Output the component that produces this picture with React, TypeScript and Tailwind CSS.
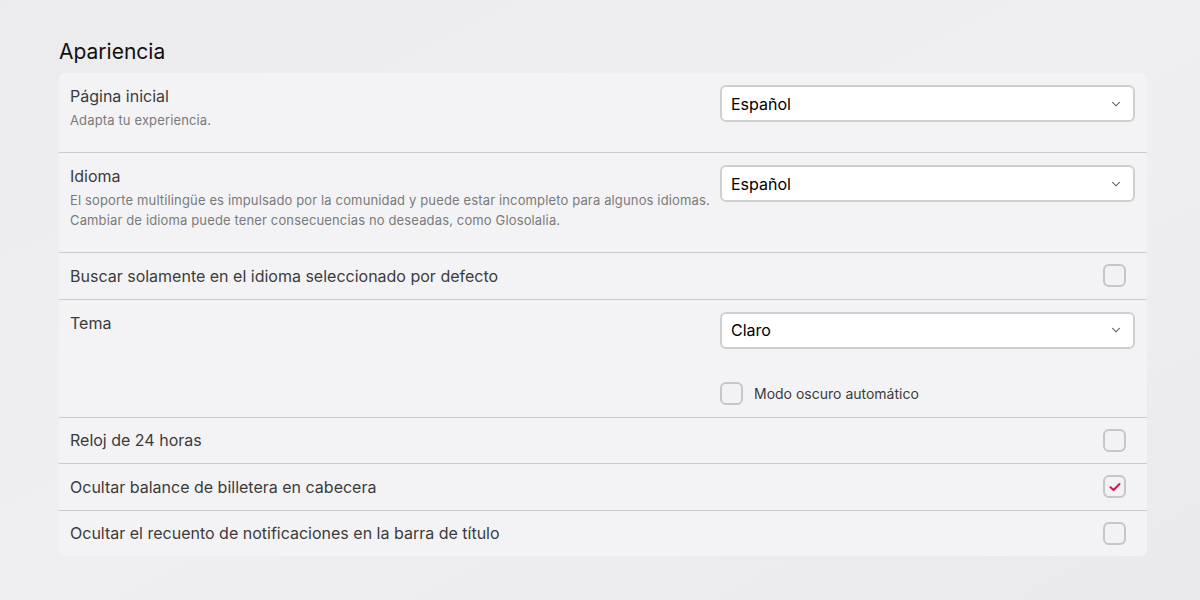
import React from 'react';
import { ChevronDown } from 'lucide-react';

const Select: React.FC<{ value: string }> = ({ value }) => (
  <div className="flex h-[37px] w-full items-center justify-between rounded-[6px] border-2 border-[#cfcfd1] bg-white pl-[9px] pr-[10px]">
    <span className="text-[16px] font-normal text-black">{value}</span>
    <ChevronDown size={14} strokeWidth={1.75} className="text-[#444]" />
  </div>
);

const Checkbox: React.FC<{ checked?: boolean }> = ({ checked }) => (
  <div className="flex h-[23px] w-[23px] flex-shrink-0 items-center justify-center rounded-[6px] border-2 border-[#c6c6c8] bg-[#f2f2f4]">
    {checked && (
      <svg width="14" height="14" viewBox="0 0 14 14" fill="none">
        <path d="M2.5 7.2 L5.6 10 L11.5 4" stroke="#cc1452" strokeWidth="2" strokeLinecap="round" strokeLinejoin="round" />
      </svg>
    )}
  </div>
);

const Label: React.FC<{ children: React.ReactNode }> = ({ children }) => (
  <div className="text-[16px] leading-[22px] text-[#3b3b3d]">{children}</div>
);

const Desc: React.FC<{ children: React.ReactNode }> = ({ children }) => (
  <div className="mt-[3px] mb-[10px] text-[13px] leading-[20px] tracking-[0.14px] text-[#7a7a7c]">{children}</div>
);

const CheckRow: React.FC<{ label: string; checked?: boolean; last?: boolean }> = ({ label, checked, last }) => (
  <div className={`flex items-center justify-between py-[11.25px] pl-[11px] pr-[21px] ${last ? '' : 'border-b border-[#cbcbcd]'}`}>
    <Label>{label}</Label>
    <Checkbox checked={checked} />
  </div>
);

export default function App() {
  return (
    <div
      className="min-h-[600px] w-full bg-gradient-to-br from-[#ececee] via-[#efeff1] to-[#eaeaec] px-[59px] pt-[38px]"
      style={{ fontFamily: 'Inter, "Noto Sans", sans-serif' }}
    >
      <h2 className="mb-[8px] text-[21px] leading-[27px] text-[#111]">Apariencia</h2>

      <div className="w-[1088px] rounded-[6px] bg-[#f3f3f5]">
        {/* Página inicial */}
        <div className="flex justify-between border-b border-[#cbcbcd] py-3 pl-[11px] pr-[12px]">
          <div>
            <Label>Página inicial</Label>
            <Desc>Adapta tu experiencia.</Desc>
          </div>
          <div className="w-[415px] flex-shrink-0">
            <Select value="Español" />
          </div>
        </div>

        {/* Idioma */}
        <div className="flex justify-between border-b border-[#cbcbcd] py-3 pl-[11px] pr-[12px]">
          <div>
            <Label>Idioma</Label>
            <Desc>
              El soporte multilingüe es impulsado por la comunidad y puede estar incompleto para algunos idiomas.
              <br />
              Cambiar de idioma puede tener consecuencias no deseadas, como Glosolalia.
            </Desc>
          </div>
          <div className="w-[415px] flex-shrink-0">
            <Select value="Español" />
          </div>
        </div>

        <CheckRow label="Buscar solamente en el idioma seleccionado por defecto" />

        {/* Tema */}
        <div className="flex justify-between border-b border-[#cbcbcd] py-3 pl-[11px] pr-[12px]">
          <Label>Tema</Label>
          <div className="w-[415px] flex-shrink-0">
            <Select value="Claro" />
            <div className="mt-[33px] flex items-center gap-[11px]">
              <Checkbox />
              <span className="text-[14px] text-[#3b3b3d]">Modo oscuro automático</span>
            </div>
          </div>
        </div>

        <CheckRow label="Reloj de 24 horas" />
        <CheckRow label="Ocultar balance de billetera en cabecera" checked />
        <CheckRow label="Ocultar el recuento de notificaciones en la barra de título" last />
      </div>
    </div>
  );
}
